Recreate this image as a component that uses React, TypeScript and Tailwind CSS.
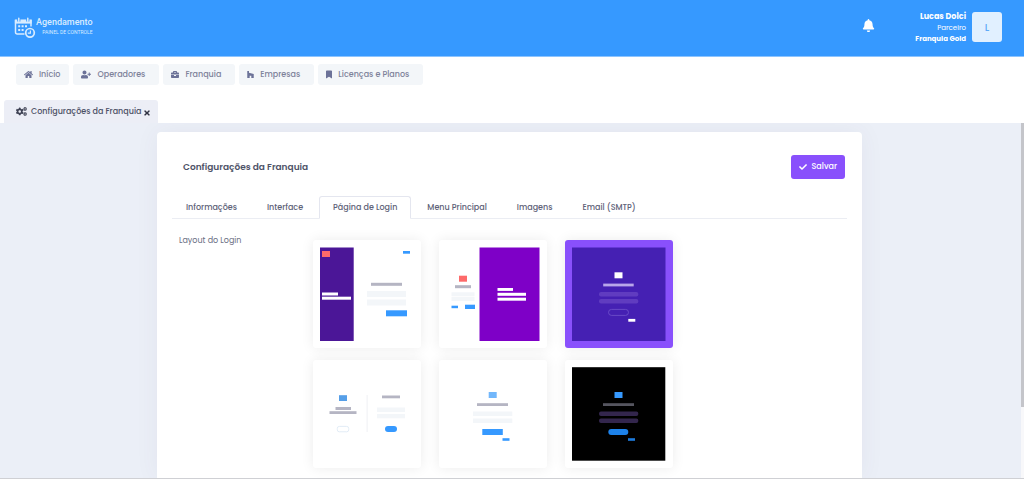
import { useState, type ReactNode } from 'react'
import { FaBell, FaBookmark, FaBriefcase, FaCheck, FaCogs, FaHome, FaHouzz, FaTimes, FaUserPlus } from 'react-icons/fa'

const menu = [
  { label: 'Início', icon: FaHome, iconWidth: 'w-[9px]', pad: 'pr-[9px]' },
  { label: 'Operadores', icon: FaUserPlus, iconWidth: 'w-[10px]', pad: 'pr-3.5' },
  { label: 'Franquia', icon: FaBriefcase, iconWidth: 'w-[8px]', pad: 'pr-3.5' },
  { label: 'Empresas', icon: FaHouzz, iconWidth: 'w-[7px]', pad: 'pr-3.5' },
  { label: 'Licenças e Planos', icon: FaBookmark, iconWidth: 'w-[6px]', pad: 'pr-3.5' },
]

const tabs = ['Informações', 'Interface', 'Página de Login', 'Menu Principal', 'Imagens', 'Email (SMTP)']

type Bar = [x: number, y: number, w: number, h: number, fill: string, rx?: number]

function Bars({ bars, children }: { bars: Bar[]; children?: ReactNode }) {
  return (
    <svg viewBox="0 0 94 94" className="block w-full" aria-hidden="true">
      {bars.map(([x, y, w, h, fill, rx], i) => (
        <rect key={i} x={x} y={y} width={w} height={h} fill={fill} rx={rx ?? 0} />
      ))}
      {children}
    </svg>
  )
}

const layouts: { name: string; art: ReactNode }[] = [
  {
    name: 'Lateral esquerda',
    art: (
      <Bars
        bars={[
          [0, 0.5, 33.7, 93.5, '#4b1697'],
          [2, 4, 8, 6, '#fd6a6a'],
          [2, 45.5, 16, 3, '#fff'],
          [2, 49.7, 29, 3, '#fff'],
          [83, 4, 7, 2.7, '#3699ff'],
          [51, 35.8, 31, 3, '#b5b5c3'],
          [47, 44, 39, 6, '#f3f6f9'],
          [47, 52.5, 39, 6, '#f3f6f9'],
          [66, 63.3, 21, 6, '#3699ff'],
        ]}
      />
    ),
  },
  {
    name: 'Lateral direita',
    art: (
      <Bars
        bars={[
          [33.5, 0.5, 60, 93.5, '#7e00c7'],
          [13, 28.7, 8, 6, '#fd6a6a'],
          [9, 38.2, 16, 3, '#b5b5c3'],
          [5.5, 45.3, 23, 4, '#f3f6f9'],
          [5.5, 50, 23, 4, '#f3f6f9'],
          [5.5, 58.7, 6.5, 2.5, '#3699ff'],
          [19, 57.7, 10, 4.3, '#3699ff'],
          [51.5, 41, 15.5, 2.9, '#fff'],
          [51.5, 45.8, 28.5, 3, '#fff'],
          [51.5, 50.7, 28.5, 3, '#fff'],
        ]}
      />
    ),
  },
  {
    name: 'Centralizado colorido',
    art: (
      <Bars
        bars={[
          [0, 0.5, 93.5, 93.5, '#4520b3'],
          [42.5, 25.3, 8, 6, '#fff'],
          [31.2, 36.6, 30.5, 2.8, '#b9a6ea'],
          [27, 45, 39.3, 4.5, '#603cc0', 2],
          [27, 52, 39.3, 4.5, '#603cc0', 2],
          [56.3, 71.9, 7, 2.8, '#fff'],
        ]}
      >
        <rect x="36.5" y="62.4" width="20" height="6" rx="3" fill="none" stroke="#7153cc" strokeWidth="0.8" />
      </Bars>
    ),
  },
  {
    name: 'Duas colunas',
    art: (
      <Bars
        bars={[
          [19, 28.2, 8, 5.8, '#569fe8'],
          [15.5, 40, 15.5, 3, '#b5b5c3'],
          [9.5, 44.2, 27, 2.8, '#b5b5c3'],
          [46.5, 28, 1.3, 37, '#f3f4f7'],
          [62, 28.5, 18, 2.8, '#b5b5c3'],
          [57, 40.5, 28, 4.5, '#f3f6f9'],
          [57, 47, 28, 4.3, '#f3f6f9'],
          [65, 59, 12, 6, '#3699ff', 3],
        ]}
      >
        <rect x="17.3" y="59.4" width="11.4" height="5.4" rx="2" fill="#fff" stroke="#dfeaf5" strokeWidth="0.9" />
      </Bars>
    ),
  },
  {
    name: 'Centralizado claro',
    art: (
      <Bars
        bars={[
          [42.7, 25, 8, 6, '#72b7fb'],
          [31, 36.2, 31, 2.8, '#b5b5c3'],
          [27, 44.5, 39.3, 4.5, '#f3f6f9'],
          [27, 51.5, 39.3, 4.5, '#f3f6f9'],
          [36.3, 62, 20.5, 6, '#3699ff'],
          [56.5, 71.2, 7, 2.6, '#3699ff'],
        ]}
      />
    ),
  },
  {
    name: 'Centralizado escuro',
    art: (
      <Bars
        bars={[
          [0, 0.2, 93.3, 93.5, '#000'],
          [42.5, 25, 8, 6, '#3699ff'],
          [31, 36.2, 31, 2.8, '#55555f'],
          [27, 44.5, 39.3, 4.5, '#33264d', 2],
          [27, 51.5, 39.3, 4.5, '#33264d', 2],
          [36.3, 62, 20, 6, '#1d82ea', 3],
          [56, 71.2, 7, 2.6, '#1d7bdd'],
        ]}
      />
    ),
  },
]

function Logo() {
  return (
    <a href="#inicio" className="mt-0.5 flex items-start text-[#d9ecff]">
      <svg viewBox="0 0 22 22" className="size-[22px]" fill="none" stroke="currentColor" aria-hidden="true">
        <path d="M10.5 17H3.2Q1.5 17 1.5 15.2V3.4H17V9.5" strokeWidth="1.5" />
        <path d="M.9 2.6h16.8v4H.9z" fill="currentColor" stroke="none" />
        <path d="M4.8 1v3.4M13.8 1v3.4" stroke="#3699ff" strokeWidth="3.2" />
        <path d="M4.8 1.2v3M13.8 1.2v3" strokeWidth="1.5" strokeLinecap="round" />
        <path d="M4.2 9.3h2M7.6 9.3h2M11 9.3h2M4.2 13h2M7.6 13h2" strokeWidth="1.9" />
        <circle cx="16" cy="15.8" r="4.3" strokeWidth="1.7" />
        <path d="M16.4 13.4v2.8h-2.6" strokeWidth="1.2" />
      </svg>
      <span className="flex flex-col items-end font-['Roboto',sans-serif]">
        <span className="text-[9px] leading-[10px] font-medium">Agendamento</span>
        <span className="text-[5px] leading-[10px]">PAINEL DE CONTROLE</span>
      </span>
    </a>
  )
}

export default function App() {
  const [tab, setTab] = useState(2)
  const [layout, setLayout] = useState(2)

  return (
    <div className="flex h-screen flex-col overflow-hidden bg-white font-['Poppins','Inter',sans-serif] text-[8px] text-[#5e6278]">
      <header className="flex h-14 shrink-0 items-center justify-between bg-[#3699ff] pr-[22px] pb-0.5 pl-3.5 text-white">
        <Logo />
        <div className="flex items-center">
          <button type="button" aria-label="Notificações" className="mr-10 mb-1 flex">
            <FaBell className="size-[13px]" />
          </button>
          <div className="text-right leading-[11px]">
            <p className="font-bold">Lucas Dolci</p>
            <p className="text-[7px] leading-[11px]">Parceiro</p>
            <p className="text-[7px] leading-[11px] font-bold">Franquia Gold</p>
          </div>
          <button
            type="button"
            className="ml-1.5 size-[30px] rounded-[3px] bg-[#e1f0ff] text-[10px] font-medium text-[#5eaaf8]"
          >
            L
          </button>
        </div>
      </header>

      <nav className="flex shrink-0 gap-1 border-t border-[#8cc4ff] px-4 pt-[7px]">
        {menu.map(({ label, icon: Icon, iconWidth, pad }) => (
          <a
            key={label}
            href="#menu"
            className={`flex h-[21px] items-center gap-1.5 rounded-[3px] bg-[#f3f6f9] pl-2 font-medium text-[#7e8299] ${pad}`}
          >
            <Icon className={`h-[9px] text-[#6c7298] ${iconWidth}`} />
            {label}
          </a>
        ))}
      </nav>

      <div className="mt-[15px] flex shrink-0 px-1">
        <div className="flex h-[23px] items-center rounded-t-[3px] bg-[#eceef6] pr-[7px] pl-3 font-medium text-[#4d5166]">
          <FaCogs className="mr-1 size-[11px] text-[#3f4254]" />
          Configurações da Franquia
          <button type="button" aria-label="Fechar aba" className="mt-0.5 ml-0.5 flex text-[#2f3242]">
            <FaTimes className="size-[8px]" />
          </button>
        </div>
      </div>

      <div className="flex min-h-0 flex-1">
        <main className="min-w-0 flex-1 overflow-hidden bg-[#ebeff7] pt-[9px] pr-[18px] pl-4">
          <section className="mx-auto min-h-full w-full max-w-[705px] rounded-t-[4px] bg-white px-[15px] pt-[23px] shadow-[0_0_24px_rgba(82,63,105,0.06)]">
            <div className="flex items-center justify-between pr-0.5 pl-[11px]">
              <h1 className="pt-0.5 text-[9px] font-semibold text-[#4f5368]">Configurações da Franquia</h1>
              <button
                type="button"
                className="flex h-6 items-center gap-[5px] rounded-[3px] bg-[#8950fc] px-2 font-medium text-white"
              >
                <FaCheck className="size-[8px]" />
                Salvar
              </button>
            </div>

            <div role="tablist" className="mt-[17px] flex gap-0.5 border-b border-[#ebedf3]">
              {tabs.map((name, i) => (
                <button
                  key={name}
                  type="button"
                  role="tab"
                  aria-selected={i === tab}
                  onClick={() => setTab(i)}
                  className={`-mb-px h-[23px] rounded-t-[3px] border px-[13px] font-medium ${
                    i === tab ? 'border-[#e4e6ef] border-b-white bg-white' : 'border-transparent'
                  }`}
                >
                  {name}
                </button>
              ))}
            </div>

            <fieldset className="flex pt-[18px] pl-[7px]">
              <div className="w-[134px] shrink-0 leading-none text-[#6b6f84]" id="layout-label">
                Layout do Login
              </div>
              <div
                role="radiogroup"
                aria-labelledby="layout-label"
                className="grid grid-cols-3 gap-x-[18px] gap-y-3 pt-[3px]"
              >
                {layouts.map(({ name, art }, i) => (
                  <label
                    key={name}
                    className={`relative w-[108px] cursor-pointer rounded-[3px] p-[7px] shadow-[0_0_13px_rgba(0,0,0,0.08)] ${
                      i === layout ? 'bg-[#8950fc]' : 'bg-white'
                    }`}
                  >
                    <input
                      type="radio"
                      name="layout"
                      aria-label={name}
                      checked={i === layout}
                      onChange={() => setLayout(i)}
                      className="sr-only"
                    />
                    {art}
                  </label>
                ))}
              </div>
            </fieldset>
          </section>
        </main>
        <div className="w-[3px] shrink-0 bg-[#f8f8fa]">
          <div className="h-4/5 bg-[#c4c5ca]" />
        </div>
      </div>
      <div className="h-px shrink-0 bg-[#cfd0d4]" />
    </div>
  )
}
